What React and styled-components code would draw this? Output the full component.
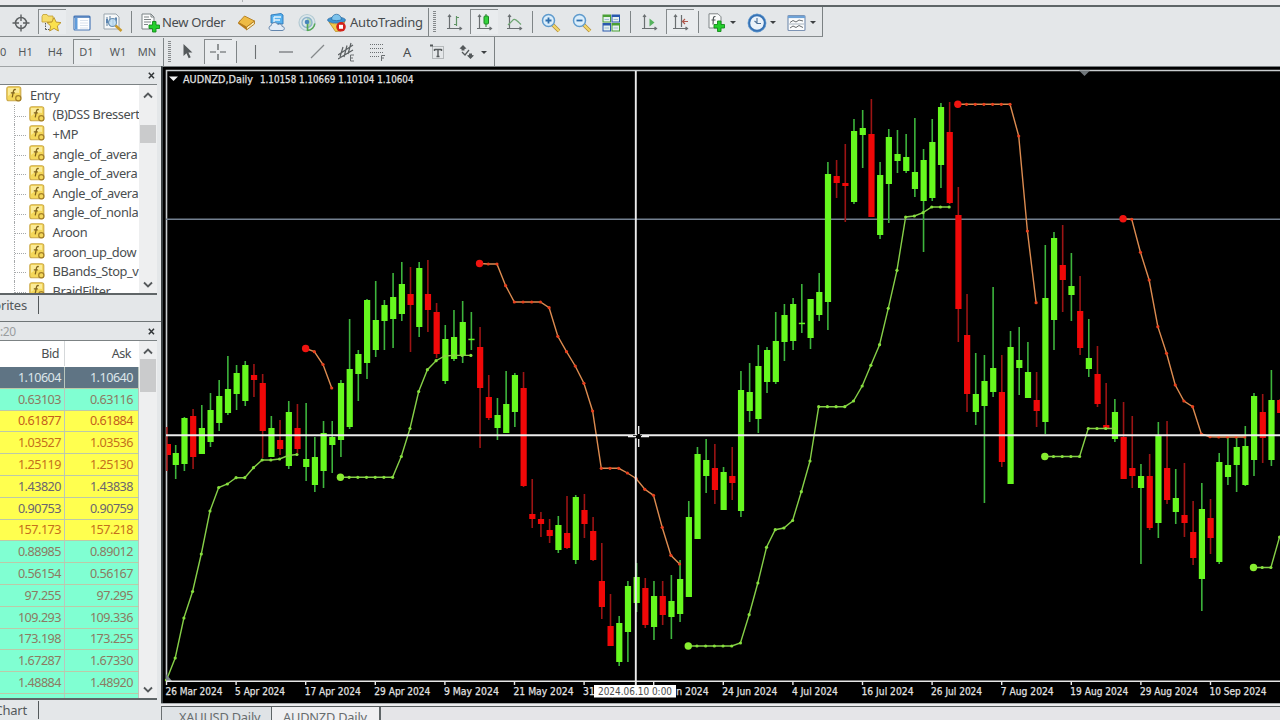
import React from "react";
import styled, { createGlobalStyle, css } from "styled-components";

const Global = createGlobalStyle`
  * { box-sizing: border-box; }
  html, body { margin: 0; padding: 0; overflow: hidden; }
  body { width: 1280px; height: 720px; background: #e4e7e9; font-family: "Noto Sans", "Open Sans", sans-serif; color: #4c5052; }
  svg { display: block; flex: none; }
`;

const Shell = styled.div`
  width: 1280px; height: 720px; display: flex; flex-direction: column; overflow: hidden; background: #e4e7e9;
`;
const MenuEdge = styled.div`
  height: 7px; flex: none; background: #e9eaec; border-bottom: 2px solid #5f6668; padding-left: 242px;
  &::before { content: ""; display: block; width: 1px; height: 2px; background: #b0b3b5; }
`;
const Toolbar = styled.div`
  display: flex; flex: none; height: ${(p) => p.$h}px; width: ${(p) => p.$w}px;
  border-right: 1px solid #7b8183; border-bottom: ${(p) => (p.$line ? "1px solid #878c8e" : "none")};
  svg { margin-top: ${(p) => (p.$line ? 2 : 0)}px; }
`;
const Cell = styled.div`
  width: ${(p) => p.$w}px; padding-left: ${(p) => p.$pl || 0}px; flex: none; display: flex; align-items: center;
  white-space: nowrap; overflow: hidden;
  ${(p) => p.$pressed && css`
    height: 25px; margin-top: 2px; padding-left: ${p.$pl - 1}px;
    border-left: 1px solid #858a8c;
    background: linear-gradient(#858a8c, #858a8c) 0 0 / 27px 1px no-repeat, #e9ecee;
  `}
`;
const Divider = styled.div`
  width: 1px; height: ${(p) => p.$h || 22}px; margin-top: ${(p) => p.$mt ?? 4}px; background: #7f8587; flex: none;
`;
const Grip = styled.div`
  width: 3px; height: 22px; background: repeating-linear-gradient(#85898b 0 1px, transparent 1px 2px);
`;
const ToolText = styled.span`
  font-size: 13px; line-height: 18px; letter-spacing: ${(p) => p.$ls || 0}px; margin-left: ${(p) => p.$ml || 0}px; color: #484c4e;
`;
const Period = styled.span`
  width: 100%; text-align: center; font-size: 11px; line-height: 14px; color: #54595b; padding-right: ${(p) => p.$pr || 0}px;
`;
const Caret = styled.i`
  border: 3px solid transparent; border-top: 3px solid #3c4042; border-bottom: 0; margin-left: ${(p) => p.$ml || 5}px; margin-top: 2px;
`;

const Body = styled.div`display: flex; flex: 1; min-height: 0;`;
const Side = styled.aside`
  width: 161px; flex: none; display: flex; flex-direction: column; border-top: 1px solid #a0a4a6; background: #e4e7e9;
`;
const PanelHead = styled.div`
  height: ${(p) => p.$h}px; flex: none; width: 157px; border-bottom: 1px solid #7c8284; display: flex; align-items: center;
  justify-content: space-between; padding-right: 2px; font-size: 12px; color: #9a9ea0; letter-spacing: -0.4px;
`;
const PanelFoot = styled.div`
  height: ${(p) => p.$h}px; flex: none; display: flex; font-size: 13px; color: #54595b; overflow: hidden;
  border-bottom: ${(p) => (p.$line ? "1px solid #6f7577" : "none")};
`;
const FootLabel = styled.span`
  width: 39px; height: 18px; line-height: 18px; padding-right: 11px; display: flex; justify-content: flex-end; overflow: hidden;
  white-space: nowrap; border-right: 1px solid #54595b; margin-top: 1px; letter-spacing: -0.2px;
`;
const Pane = styled.div`
  height: ${(p) => p.$h}px; width: 157px; flex: none; display: flex; border-bottom: 2px solid #5f6567; background: #fff; overflow: hidden;
`;
const Tree = styled.div`width: 139px; flex: none; overflow: hidden; display: flex; flex-direction: column; background: #fff;`;
const Node = styled.div`
  height: 19.6px; flex: none; display: flex; align-items: center; white-space: nowrap; font-size: 12.8px; color: #4a4e50;
  letter-spacing: -0.38px;
  padding-left: ${(p) => (p.$root ? 6 : 14)}px;
`;
const Branch = styled.span`
  width: 14.5px; height: 100%; flex: none; border-left: 1px dotted #a6a9ab;
  background: repeating-linear-gradient(90deg, #a6a9ab 0 1px, transparent 1px 2px) 0 11px / 12px 1px no-repeat;
`;
const NodeText = styled.span`margin-left: 7px;`;
const Scroll = styled.div`
  width: 18px; flex: none; background: #eeeff0; display: flex; flex-direction: column; align-items: center; padding: ${(p) => p.$pad};
`;
const Thumb = styled.div`width: 16px; height: ${(p) => p.$h}px; margin-top: ${(p) => p.$mt}px; background: #cacbcc;`;
const Push = styled.div`flex: 1;`;

const Quotes = styled.div`width: 139px; flex: none; overflow: hidden;`;
const QuoteRow = styled.div`
  display: grid; grid-template-columns: 65px 74px; height: ${(p) => p.$h || 21.8}px;
  background: ${(p) => p.$bg}; color: ${(p) => p.$fg}; border-bottom: 1px solid ${(p) => p.$line || "#bcc9a8"};
`;
const Quote = styled.div`
  display: flex; justify-content: flex-end; align-items: center; padding-right: ${(p) => p.$pr ?? 3}px; font-size: 12.6px;
  letter-spacing: -0.5px; border-right: 1px solid ${(p) => p.$line || "#b9c6bd"};
`;

const ChartSide = styled.main`flex: 1; min-width: 0; display: flex; flex-direction: column;`;
const ChartFrame = styled.div`
  height: 637px; flex: none; background: #000; border-left: 2px solid #3a4042; border-top: 1px solid #787e80; overflow: hidden;
`;
const FrameEdge = styled.div`height: 3px; flex: none; background: linear-gradient(#a9adaf 0 1px, #ececee 1px 3px);`;
const Tabs = styled.div`
  flex: 1; display: flex; background: #e5e5e8; border-top: 1px solid #555b5d; border-left: 1px solid #6a7072;
`;
const Tab = styled.div`
  width: ${(p) => p.$w}px; padding: 1px 0 0 ${(p) => p.$pl}px; font-size: 12.8px; line-height: 18px; white-space: nowrap; color: #686d6f;
  letter-spacing: ${(p) => p.$ls}px;
  background: ${(p) => (p.$on ? "#f0f0f2" : "#dfe3e6")}; border-right: ${(p) => (p.$on ? 2 : 1)}px solid #5f6567;
`;

/* ---------- icons ---------- */
const Ic = ({ w = 18, h = 18, children }) => (
  <svg width={w} height={h} viewBox={`0 0 ${w} ${h}`} fill="none">{children}</svg>
);
const IcTarget = () => (
  <Ic><circle cx="9" cy="9" r="5.5" stroke="#5c6062" strokeWidth="1.500" /><path d="M9 .5V7M9 11v6.500M.5 9H7M11 9h6.500" stroke="#5c6062" strokeWidth="1.400" /></Ic>
);
const IcStar = () => (
  <Ic w={22} h={20}>
    <path d="M2 3.500l1-2h4l1 1.500h5v6H2z" fill="#f6dd6a" stroke="#c2a030" strokeWidth=".8" />
    <path d="M5.500 10v7M5.500 16.500h5" stroke="#55595b" strokeDasharray="1.500 1" />
    <path d="M14 4.500l2.100 4.600 4.900.5-3.700 3.400 1.100 5-4.400-2.600-4.400 2.600 1.100-5L7 9.600l4.900-.5z" fill="#fbe14d" stroke="#b9922a" strokeWidth=".9" />
  </Ic>
);
const IcWindow = () => (
  <Ic><rect x="1" y="2" width="16" height="14" rx="1" fill="#fdfeff" stroke="#4a79b8" strokeWidth="1.200" /><path d="M1 3h16" stroke="#3b70b4" strokeWidth="1.500" /><rect x="2" y="4" width="2.500" height="11.500" fill="#5f9cdb" /><path d="M7 6.500h8M7 9h8M7 11.500h8M7 14h8" stroke="#cfdbe8" strokeWidth=".8" /></Ic>
);
const IcTester = () => (
  <Ic w={20} h={19}>
    <path d="M1 1h12l3 3v12H1z" fill="#f6f8f9" stroke="#9aa5ad" />
    <path d="M4 4v9M7 3v6M10 5v8M13 4v5" stroke="#5b7d9c" strokeWidth="1" /><path d="M3 6h2v4H3zM12 5h2v3h-2z" fill="#5b84b0" />
    <circle cx="9.500" cy="9.500" r="4" fill="#bcdcf2cc" stroke="#6d93b5" strokeWidth="1.200" /><path d="M12.500 12.500l6 5.500" stroke="#c99a2c" strokeWidth="2.600" />
  </Ic>
);
const Plus = ({ x, y }) => <path transform={`translate(${x} ${y})`} d="M3.500 0h3.500v3.500h3.500V7H7v3.500H3.500V7H0V3.500h3.500z" fill="#24cf2c" stroke="#148a1c" strokeWidth=".9" />;
const IcOrder = () => (
  <Ic w={19} h={20}>
    <path d="M1 1h9l3 3v12H1z" fill="#fbfcfc" stroke="#7b8284" /><path d="M3 4h5M3 6.500h7M3 9h7M3 11.500h4" stroke="#7e8587" /><path d="M10 1v3h3" stroke="#7b8284" />
    <Plus x={8} y={8.500} />
  </Ic>
);
const IcBook = () => (
  <Ic w={19} h={18}>
    <path d="M1 9.500l8.500 6.500v-3.500L2.500 6.500z" fill="#b87a17" /><path d="M9.500 16l8-6V7l-8 6z" fill="#f8e7b0" stroke="#b17a1e" strokeWidth=".9" />
    <path d="M1.500 8.500L7.500 2l10 5-8 6z" fill="#eebb44" stroke="#b17a1e" strokeWidth=".9" />
  </Ic>
);
const IcCloud = () => (
  <Ic w={18} h={19}>
    <path d="M3 2l10-1.500 2 1.500v9L3 10z" fill="#57b1ee" stroke="#2a78ba" strokeWidth=".9" /><path d="M6 4h7M6 7h6M6 4v5" stroke="#e5f4fd" strokeWidth="1.300" />
    <path d="M4 17.500c-3.500 0-4-4.500-.8-4.900C3.500 9 8.500 8.500 9.800 11.500c2.200-1.200 4.500 0 4.400 2 2.900.2 2.900 4-.2 4z" fill="#e3ecf6" stroke="#6386ad" strokeWidth="1" />
  </Ic>
);
const IcSignal = () => (
  <Ic w={20} h={19}>
    <circle cx="10" cy="9.500" r="8" fill="#dbe6ea" stroke="#b3cad3" strokeWidth="1.200" />
    <path d="M10 4a5.500 5.500 0 0 1 2 10.500L10 17.500z" fill="#9fd09e" opacity=".7" />
    <circle cx="10" cy="9.500" r="5" stroke="#8db3cc" strokeWidth="1.300" />
    <circle cx="10" cy="9" r="2.300" fill="#4786bb" /><path d="M10.500 11v7M10.500 17.500c4 0 7-3.500 7.300-7" stroke="#55a858" strokeWidth="1.600" />
  </Ic>
);
const IcAuto = () => (
  <Ic w={20} h={20}>
    <path d="M2 9c3 2.500 12 2.500 16-1l-4 10-5.500.5z" fill="#f1ca4a" stroke="#b88d24" strokeWidth=".8" />
    <ellipse cx="9.500" cy="7" rx="9" ry="3" fill="#3c93d2" stroke="#28699f" strokeWidth=".7" /><path d="M4.500 6.500C5-.5 14-.5 14.500 6.500c-2 1.500-8 1.500-10 0z" fill="#7cc3ec" stroke="#28699f" strokeWidth=".7" />
    <circle cx="14" cy="13.800" r="4.800" fill="#d3231c" /><rect x="12" y="11.800" width="4" height="4" fill="#fff" />
  </Ic>
);
const Axes = () => <path d="M3.500 1v14M1 14.500h14M2 3l1.500-2L5 3M13.500 13l2 1.500-2 1.500" stroke="#6a6f71" strokeWidth="1.200" />;
const IcBars = () => <Ic w={17}><Axes /><path d="M10.500 2v10M8 10.500h2.500M10.500 3.500H13" stroke="#5f9464" strokeWidth="1.200" /></Ic>;
const IcCandle = () => <Ic w={17}><Axes /><path d="M10 0v13" stroke="#267d2b" /><rect x="8" y="2" width="4.500" height="8" rx="1" fill="#34d33c" stroke="#1d8524" /></Ic>;
const IcLine = () => <Ic w={17}><Axes /><path d="M2 11L7.500 5.500c1.500-.8 3 .5 7.500 5" stroke="#6fa673" strokeWidth="1.200" /></Ic>;
const IcZoom = ({ plus }) => (
  <Ic w={20} h={20}>
    <path d="M11.500 11.500l6.500 6.500" stroke="#b08c3a" strokeWidth="3.800" /><path d="M11.500 11.500l6.500 6.500" stroke="#f2d668" strokeWidth="2.400" />
    <circle cx="7.500" cy="7.500" r="6" fill="#dbeefb" stroke="#5f9bcd" strokeWidth="1.500" />
    <path d={plus ? "M4.500 7.500h6M7.500 4.500v6" : "M4.500 7.500h6"} stroke="#2e6eac" strokeWidth="1.800" />
  </Ic>
);
const IcTile = () => (
  <Ic w={19} h={18}>
    <rect x=".5" y=".5" width="8.500" height="8" fill="#49a035" /><rect x="9.500" y=".5" width="8.500" height="8" fill="#2858ae" />
    <rect x=".5" y="9" width="8.500" height="8.500" fill="#2858ae" /><rect x="9.500" y="9" width="8.500" height="8.500" fill="#49a035" />
    <path d="M1.500 3h6.500v4.500H1.500zM10.500 3H17v4.500h-6.500zM1.500 11.500h6.500v5H1.500zM10.500 11.500H17v5h-6.500z" fill="#e4f0ee" />
    <path d="M2.500 5.500h4.500M11.500 5.500H16M2.500 14h4.500M11.500 14H16" stroke="#9dbbd0" />
  </Ic>
);
const IcScroll = () => <Ic w={17}><Axes /><path d="M8.500 4.500v8l5-4z" fill="#55b25e" /></Ic>;
const IcShift = () => <Ic w={17}><Axes /><path d="M9.500 1v12" stroke="#6a6f71" strokeWidth="1.200" /><path d="M16 7.500h-5M13 5l-2.500 2.500L13 10" stroke="#b0584c" strokeWidth="1.200" /></Ic>;
const IcIndicator = () => (
  <Ic w={19} h={20}>
    <path d="M4 .8h7l3 3V15H2V.8z" fill="#fafbfb" stroke="#7f8587" /><path d="M8.500 3.500c-3-.5-2 3-2.500 8M4.500 7h4" stroke="#4c5254" strokeWidth="1.100" /><Plus x={7} y={8} />
  </Ic>
);
const IcClock = () => (
  <Ic w={20} h={20}><circle cx="10" cy="10" r="8" fill="#eaf2fa" stroke="#3672b4" strokeWidth="2.400" /><circle cx="10" cy="10" r="9" stroke="#6aa3d8" strokeWidth=".6" /><path d="M10 5v5.500h4M10 10l-2.500-2" stroke="#4b6f96" strokeWidth="1.100" /></Ic>
);
const IcTemplate = () => (
  <Ic w={19} h={18}><rect x="1" y="1.500" width="17" height="15" rx="1" fill="#fbfcfd" stroke="#7d94b4" strokeWidth="1.200" /><path d="M1 3h17" stroke="#6ea2d6" strokeWidth="2.200" /><path d="M3 8.500l3-2 3 1.500 3-2 4 1" stroke="#686d6f" /><path d="M2 10h15" stroke="#98a4b0" strokeWidth=".8" /><path d="M3 14l3-2 3 1.500 3-2 4 2" stroke="#686d6f" /></Ic>
);
const IcPointer = () => <Ic w={12} h={17}><path d="M1.500 1v12l3-2.800 2.200 5 2-1-2.300-4.700h4z" fill="#54595b" /></Ic>;
const IcCross = () => <Ic w={16} h={16}><path d="M8 0v6M8 10v6M0 8h6M10 8h6" stroke="#54595b" strokeWidth="1.200" /></Ic>;
const IcV = () => <Ic w={3} h={16}><path d="M1.500 1v14" stroke="#6c7072" strokeWidth="1.100" /></Ic>;
const IcH = () => <Ic w={14} h={4}><path d="M0 2h14" stroke="#6c7072" strokeWidth="1.200" /></Ic>;
const IcTrend = () => <Ic w={15} h={15}><path d="M1 14L14 1" stroke="#85898b" strokeWidth="1.200" /></Ic>;
const IcEqui = () => (
  <Ic w={18} h={20}><path d="M0 13L15 3M0 17L15 8M5 5L2 15M9 3.500L6 15M13 1l-3 11" stroke="#5c6163" strokeWidth="1.200" /><path d="M16 13h-3.500v6H16M12.500 16H15" stroke="#6a6f71" /></Ic>
);
const IcFibo = () => (
  <Ic w={18} h={20}><path d="M1 2.500h14M1 6.500h14M1 10.500h14M1 14.500h10" stroke="#6a6f71" strokeDasharray="1 1" /><path d="M16 13.500h-3.500V19M12.500 16H15" stroke="#6a6f71" /></Ic>
);
const IcLabel = () => (
  <Ic w={15} h={16}><rect x="2.500" y="2.500" width="11" height="12" stroke="#85898b" strokeDasharray="1 1" /><path d="M4.500 5.500h7M8 5.500v7M6.500 12.500h3M4.500 5v2M11.500 5v2" stroke="#54595b" strokeWidth="1.400" /><path d="M0 .5h3v2H0z" fill="#54595b" /></Ic>
);
const IcArrows = () => (
  <Ic w={16} h={16}><path d="M4 1l3.500 3.500L5.500 5v1.500h-3V5L.5 4.500z" fill="#54595b" /><path d="M11.500 15L8 11.500l2-.5V9.500h3V11l2 .5z" fill="#54595b" /><path d="M3 8l3 3 4-5" stroke="#54595b" strokeWidth="1.300" /></Ic>
);
const IcFx = () => (
  <Ic w={17} h={17}>
    <rect x=".8" y=".8" width="14" height="14" rx="2" fill="#f4d75a" stroke="#cba94a" strokeWidth="1.100" /><path d="M2 2h11v5c-4-1-8 0-11 3z" fill="#fbeb98" />
    <path d="M9.800 3.600c-3-.9-2.300 3-3.600 7.800M4.800 6.800h4" stroke="#80631c" strokeWidth="1.300" /><circle cx="12.300" cy="12.300" r="2.600" fill="#f4d75a" stroke="#a37f28" strokeWidth="1.200" />
  </Ic>
);
const IcClose = () => <Ic w={7} h={7}><path d="M.8.800l5.200 5.400M6 .8L.8 6.200" stroke="#303436" strokeWidth="1.500" /></Ic>;
const Chevron = ({ up }) => <Ic w={10} h={7}><path d={up ? "M1 5.500l4-4 4 4" : "M1 1.500l4 4 4-4"} stroke="#55595b" strokeWidth="1.800" /></Ic>;

/* ---------- data ---------- */
const nodes = ["(B)DSS Bressert", "+MP", "angle_of_avera", "angle_of_avera", "Angle_of_avera", "angle_of_nonla", "Aroon", "aroon_up_dow", "BBands_Stop_v", "BraidFilter"];
const AQ = "#80ffd2", YE = "#ffff4f";
const quotes = [
  ["1.10604", "1.10640", "#5f7484", "#dde6ea"], ["0.63103", "0.63116", AQ, "#8d7a62"], ["0.61877", "0.61884", YE, "#c4601c"],
  ["1.03527", "1.03536", YE, "#c4701c"], ["1.25119", "1.25130", YE, "#c4701c"], ["1.43820", "1.43838", YE, "#6a6470"],
  ["0.90753", "0.90759", YE, "#6a6470"], ["157.173", "157.218", YE, "#c4701c"], ["0.88985", "0.89012", AQ, "#8d7a62"],
  ["0.56154", "0.56167", AQ, "#8d7a62"], ["97.255", "97.295", AQ, "#8d7a62"], ["109.293", "109.336", AQ, "#8d7a62"],
  ["173.198", "173.255", AQ, "#8d7a62"], ["1.67287", "1.67330", AQ, "#8d7a62"], ["1.48884", "1.48920", AQ, "#8d7a62"],
];

/* one bar per entry: direction, high, body top, body bottom, low */
const bars = `r427 444 455 471|g445 453 465 479|g417 418 464 471|r409 416 457 469|g405 428 454 454|g393 410 442 447|g380 396 423 431|g356 389 413 415|g365 373 394 410|g361 365 401 406
r364 375 380 397|r374 383 431 458|g416 428 457 457|r420 440 449 455|g401 412 466 469|r404 428 449 453|g403 459 467 481|g437 457 485 492|g421 433 471 488|g421 437 445 473
g380 383 440 457|g319 369 427 429|g350 354 374 401|g299 300 363 379|g281 320 350 357|g300 305 321 350|g273 297 319 348|g262 284 314 321|r267 294 305 352|g262 268 327 337
r260 294 310 332|r303 312 354 358|g325 339 381 384|g310 337 359 361|g301 322 356 363|g312 338.700 340.200 350|r327 347 388 448|r375 397 418 420|g398 415 428 440|g371 404 433 433
g373 375 412 427|r372 388 486 487|r479 514 519 528|r512 519 524 537|r519 530 536 543|g516 525 550 553|r496 533 548 549|g495 497 560 564|r494 510 524 538|r517 531 560 561
r543 581 607 619|r594 626 646 646|g616 623 662 666|g581 586 632 662|g563 577 603 612|r578 588 625 628|g581 596 627 640|r581 596 615 625|g575 601 617 639|g560 579 614 622
g501 517 597 597|g447 454 539 539|g439 460 476 493|r444 468 490 504|g467 472 510 510|r447 476 483 500|g371 390 511 517|g363 392 411 422|g345 366 419 433|g347 350 382 393
g312 341 382 384|g304 315 342 361|g298 304 341 350|g284 322.700 324.200 333|g299 299 338 349|g273 292 315 321|g162 174 302 330|r160 176 183 198|r144 183 186 222|g119 131 202 204
g110 128 135 168|r99 134 217 217|g162 175 235 239|g129 137 184 223|g130 154 161 173|g134 157 171 173|g118 172 189 197|g149 160 201 252|g119 142 198 201|g103 107 165 188
r102 132 203 204|r187 215 309 342|r294 335 394 412|g353 394 412 425|g355 381 406 503|g287 368 392 397|r355 392 462 467|g331 347 484 484|g327 360 368 395|g342 372 398 398
r372 400 411 427|g245 298 422 434|g232 238 320 350|r225 265 280 312|g253 286 295 321|r276 311 348 355|g319 358 369 377|r346 374 404 407|r383 425 428 430|g399 412 439 442
r402 437 479 479|r416 468 476 488|g464 476 488 564|r454 476 528 530|g422 435 523 538|r421 468 500 504|g469 498 512 524|r463 515 523 537|r501 532 558 565|g483 509 579 611
r499 518 538 554|g453 462 562 564|g437 465 477 485|g437 447 465 492|g426 446 485 486|g393 396 460 476|r394 412 438 463|g370 400 460 466|r399 400 413 413`
  .split(/[|\n]/).map((s) => [s[0], ...s.slice(1).split(" ").map(Number)]);

const up = [
  [0, [680, 658, 618, 591.5, 554, 511, 487.5, 484, 477.7, 477.7, 467.7, 460, 460, 459, 455.5, 454.5], true],
  [20, [477.3, 477.3, 477.3, 477.3, 477.3, 477.3, 477.3, 456.5, 428.5, 391.5, 369.7, 360.7, 356, 355.4, 355.4, 355.4]],
  [60, [646, 646, 646, 646, 646, 646, 643, 614.7, 583, 547.3, 529.7, 528, 520.5, 491.7, 461, 406.7, 406.7, 406.7, 406.7, 401, 386, 365.3, 344.7, 308.3, 270.3, 217, 216, 212.7, 207, 207, 207]],
  [101, [456.5, 456.5, 456.5, 456.5, 456.5, 428.5, 428.5, 428.5, 428.5]],
  [125, [567.5, 567.5, 567.5, 537]],
];
const down = [
  [16, [348.5, 351.7, 364.5, 388]],
  [36, [263.5, 264, 264, 285.7, 302, 302, 302, 302, 307.7, 336.3, 351.7, 366, 383.3, 411, 468.3, 468.3, 468.3, 473, 478.5, 489.3, 495.3, 527.3, 555.3, 564]],
  [91, [104.3, 104.3, 104.3, 104.3, 104.3, 104.3, 104.3, 136, 231, 302.7]],
  [110, [218.7, 219.3, 252.3, 280, 326.7, 353.3, 385, 401, 406.7, 434, 436.7, 437, 437, 437, 437]],
];
const dates = ["26 Mar 2024", "5 Apr 2024", "17 Apr 2024", "29 Apr 2024", "9 May 2024", "21 May 2024", "31 May 2024", "12 Jun 2024", "24 Jun 2024", "4 Jul 2024", "16 Jul 2024", "26 Jul 2024", "7 Aug 2024", "19 Aug 2024", "29 Aug 2024", "10 Sep 2024"];
const widths = [57, 50, 56, 56, 55, 60, 60, 56, 55, 46, 52, 51, 53, 58, 58, 57];
const bx = (i) => 167 + 8.696 * i;

const ChartText = styled.text`
  font-family: "DejaVu Sans", sans-serif; font-size: 10.4px; fill: ${(p) => p.$c || "#e2e2e2"};
  stroke: ${(p) => p.$c || "#e2e2e2"}; stroke-width: ${(p) => p.$sw ?? 0.25}px;
`;

const Trail = ({ start, ys, line, dot, big, noHead }) => (
  <g>
    <polyline points={ys.map((y, k) => `${bx(start + k) - 0.5},${y}`).join(" ")} fill="none" stroke={line} strokeWidth="1.400" />
    {ys.map((y, k) => <circle key={k} cx={bx(start + k) - 0.5} cy={y} r={k === 0 && !noHead ? 3.7 : 1.6} fill={k === 0 ? big : dot} />)}
  </g>
);

const Chart = () => (
  <svg width="1117" height="636" viewBox="163 67 1117 636">
    <path d="M166.500 681V70.500H1280" stroke="#c9cdcf" strokeWidth="1.600" fill="none" />
    <path d="M1079 70.500h11l-5.500 5.500z" fill="#70767a" />
    <path d="M166 219.200H1280" stroke="#738090" strokeWidth="1.400" />
    {bars.map(([d, h, t, b, l], i) => {
      const x = bx(i), g = d === "g";
      return (
        <g key={i}>
          <path d={`M${x} ${h}V${l}`} stroke={g ? "#3db43c" : "#9c1414"} strokeWidth="1.600" />
          <rect x={i === 0 ? x : x - 3} y={t} width={i === 0 ? 4 : 6.2} height={Math.max(b - t, 1.5)} fill={g ? "#66f81e" : "#f00808"} />
        </g>
      );
    })}
    {up.map(([s, ys, nh]) => <Trail key={s} start={s} ys={ys} line="#86cf48" dot="#86e03c" big="#88ee30" noHead={nh} />)}
    {down.map(([s, ys]) => <Trail key={s} start={s} ys={ys} line="#dc8b50" dot="#e8401e" big="#f01410" />)}
    <path d="M166 674v7h6z" fill="#7b858c" />
    <path d="M166 681.300H1280" stroke="#e8e8e8" strokeWidth="1.600" />
    {dates.map((d, i) => (
      <g key={d}>
        <path d={`M${166.5 + 69.6 * i} 681v4`} stroke="#e8e8e8" strokeWidth="1.400" />
        <ChartText x={165.5 + 69.6 * i} y="695" textLength={widths[i]} lengthAdjust="spacingAndGlyphs">{d}</ChartText>
      </g>
    ))}
    <path d="M166 435.200H1280M635.800 71V685" stroke="#ececec" strokeWidth="1.900" />
    <path d="M633 436.700h9M638.700 432.500v8.500" stroke="#000" strokeWidth="3" />
    <path d="M628 436.700h8M641 436.700h8M638.700 426v8M638.700 439v8" stroke="#f2f2f2" strokeWidth="1.300" />
    <rect x="594" y="685" width="82" height="12.500" fill="#fff" />
    <ChartText x="598" y="695" $c="#4c4c4c" $sw={0} textLength="74" lengthAdjust="spacingAndGlyphs">2024.06.10 0:00</ChartText>
    <path d="M169 76.500h9l-4.500 4.500z" fill="#f0f0f0" />
    <ChartText x="183" y="82.500" textLength="70" lengthAdjust="spacingAndGlyphs">AUDNZD,Daily</ChartText>
    <ChartText x="260" y="82.500" textLength="153.500" lengthAdjust="spacingAndGlyphs">1.10158 1.10669 1.10104 1.10604</ChartText>
  </svg>
);

export default function App() {
  return (
    <Shell>
      <Global />
      <MenuEdge />
      <Toolbar $h={30} $w={823} $line>
        <Cell $w={38} $pl={12}><IcTarget /></Cell>
        <Cell $w={28} $pl={2} $pressed><IcStar /></Cell>
        <Cell $w={31} $pl={7}><IcWindow /></Cell>
        <Cell $w={34} $pl={6}><IcTester /></Cell>
        <Divider />
        <Cell $w={100} $pl={9}><IcOrder /><ToolText $ml={2} $ls={-0.35}>New Order</ToolText></Cell>
        <Cell $w={30} $pl={5}><IcBook /></Cell>
        <Cell $w={31} $pl={6}><IcCloud /></Cell>
        <Cell $w={30} $pl={4}><IcSignal /></Cell>
        <Cell $w={105} $pl={4}><IcAuto /><ToolText $ml={3} $ls={-0.22}>AutoTrading</ToolText></Cell>
        <Divider $h={28} $mt={1} />
        <Cell $w={12} $pl={4}><Grip /></Cell>
        <Cell $w={29} $pl={5}><IcBars /></Cell>
        <Cell $w={28} $pl={6} $pressed><IcCandle /></Cell>
        <Cell $w={34} $pl={8}><IcLine /></Cell>
        <Divider />
        <Cell $w={34} $pl={8}><IcZoom plus /></Cell>
        <Cell $w={31} $pl={5}><IcZoom /></Cell>
        <Cell $w={32} $pl={4}><IcTile /></Cell>
        <Divider />
        <Cell $w={35} $pl={10}><IcScroll /></Cell>
        <Cell $w={32} $pl={6} $pressed><IcShift /></Cell>
        <Divider />
        <Cell $w={42} $pl={8}><IcIndicator /><Caret $ml={4} /></Cell>
        <Cell $w={40} $pl={6}><IcClock /><Caret $ml={3} /></Cell>
        <Cell $w={40} $pl={6}><IcTemplate /><Caret $ml={4} /></Cell>
      </Toolbar>
      <Toolbar $h={29} $w={495}>
        <Cell $w={10}><Period $pr={5}>0</Period></Cell>
        <Cell $w={31}><Period>H1</Period></Cell>
        <Cell $w={32}><Period $pr={4}>H4</Period></Cell>
        <Cell $w={27} $pl={1} $pressed><Period $pr={1}>D1</Period></Cell>
        <Cell $w={36}><Period>W1</Period></Cell>
        <Cell $w={27}><Period $pr={5}>MN</Period></Cell>
        <Divider $h={28} $mt={1} />
        <Cell $w={17} $pl={4}><Grip /></Cell>
        <Cell $w={23} $pl={1}><IcPointer /></Cell>
        <Cell $w={32} $pl={6} $pressed><IcCross /></Cell>
        <Divider />
        <Cell $w={42} $pl={17}><IcV /></Cell>
        <Cell $w={31} $pl={0}><IcH /></Cell>
        <Cell $w={28} $pl={0}><IcTrend /></Cell>
        <Cell $w={31} $pl={0}><IcEqui /></Cell>
        <Cell $w={33} $pl={0}><IcFibo /></Cell>
        <Cell $w={27}><ToolText $ml={1}>A</ToolText></Cell>
        <Cell $w={30} $pl={1}><IcLabel /></Cell>
        <Cell $w={32} $pl={0}><IcArrows /><Caret $ml={6} /></Cell>
      </Toolbar>
      <Body>
        <Side>
          <PanelHead $h={18}><span /><IcClose /></PanelHead>
          <Pane $h={210}>
            <Tree>
              <Node $root><IcFx /><NodeText>Entry</NodeText></Node>
              {nodes.map((n, i) => (
                <Node key={i}><Branch /><IcFx /><NodeText>{n}</NodeText></Node>
              ))}
            </Tree>
            <Scroll $pad="7px 0 5px"><Chevron up /><Thumb $h={18} $mt={26} /><Push /><Chevron /></Scroll>
          </Pane>
          <PanelFoot $h={27} $line><FootLabel>Favorites</FootLabel></PanelFoot>
          <PanelHead $h={19}><span>:20</span><IcClose /></PanelHead>
          <Pane $h={359}>
            <Quotes>
              <QuoteRow $h={26} $bg="#fff" $fg="#4a4e50" $line="#fff">
                <Quote $pr={5} $line="#d5d8da">Bid</Quote><Quote $pr={7} $line="#fff">Ask</Quote>
              </QuoteRow>
              {quotes.map(([b, a, bg, fg]) => (
                <QuoteRow key={b} $bg={bg} $fg={fg}><Quote>{b}</Quote><Quote $pr={5}>{a}</Quote></QuoteRow>
              ))}
              <QuoteRow $bg={AQ}><Quote /><Quote /></QuoteRow>
            </Quotes>
            <Scroll $pad="7px 0 5px"><Chevron up /><Thumb $h={33} $mt={4} /><Push /><Chevron /></Scroll>
          </Pane>
          <PanelFoot $h={20}><FootLabel>Tick Chart</FootLabel></PanelFoot>
        </Side>
        <ChartSide>
          <ChartFrame><Chart /></ChartFrame>
          <FrameEdge />
          <Tabs>
            <Tab $w={110} $pl={17} $ls={-0.2}>XAUUSD Daily</Tab>
            <Tab $w={109} $pl={11} $ls={-0.2} $on>AUDNZD Daily</Tab>
          </Tabs>
        </ChartSide>
      </Body>
    </Shell>
  );
}
